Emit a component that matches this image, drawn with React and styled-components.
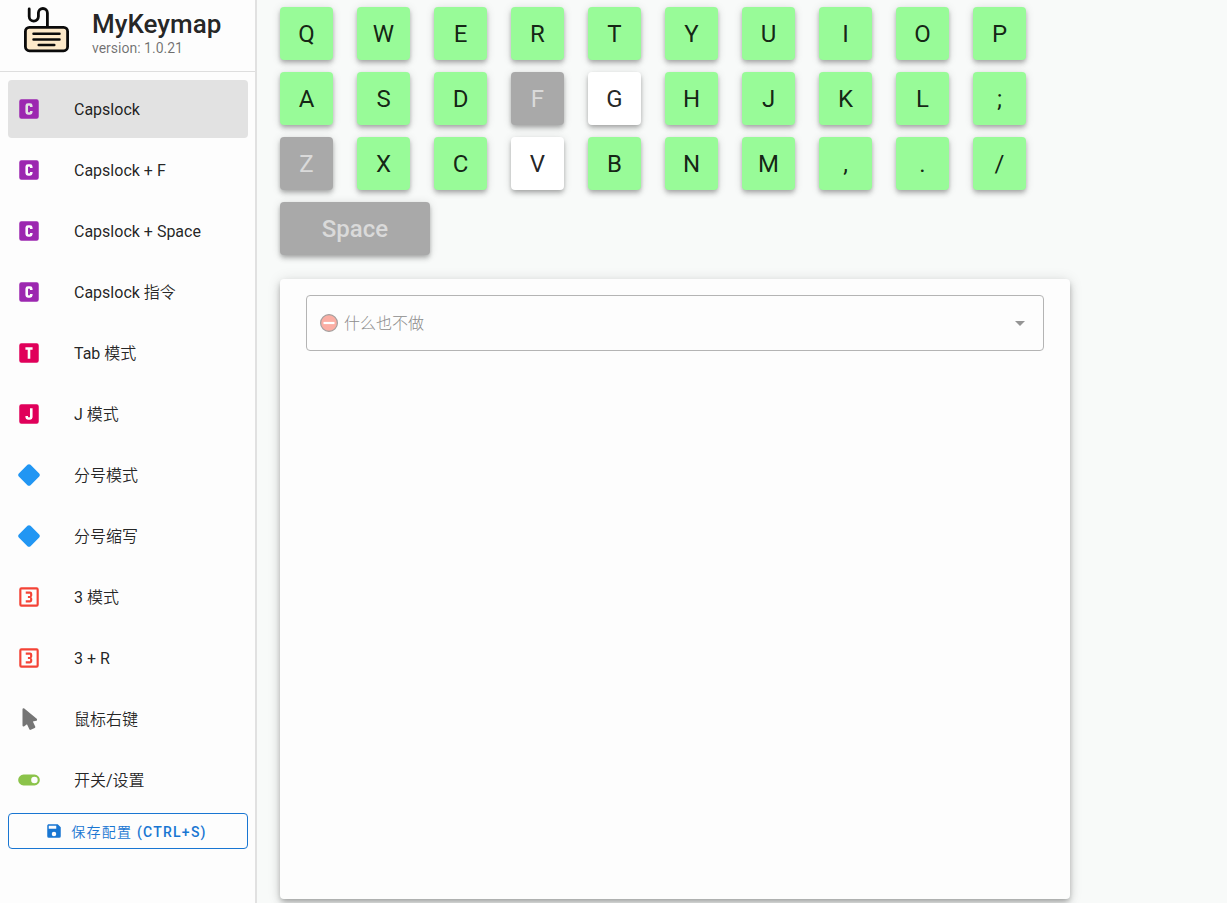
import React, { useState } from "react";
import styled, { createGlobalStyle } from "styled-components";

const GlobalStyle = createGlobalStyle`
  *, *::before, *::after { box-sizing: border-box; }
  body {
    margin: 0;
    background: #f8faf9;
    color: rgba(0, 0, 0, 0.87);
    font-family: Roboto, "Noto Sans CJK SC DemiLight", "Noto Sans CJK SC", sans-serif;
    font-size: 16px;
    line-height: 24px;
  }
  button { font-family: inherit; }
`;

const Page = styled.div`
  display: flex;
  min-height: 100vh;
`;

const Sidebar = styled.aside`
  flex: 0 0 257px;
  background: #fdfdfd;
  border-right: 2px solid #e1e1e1;
`;

const Brand = styled.header`
  display: flex;
  gap: 20px;
  height: 72px;
  padding: 6px 0 0 23px;
  border-bottom: 1px solid #dedede;
`;

const Title = styled.h1`
  margin: 4px 0 0;
  font-size: 26px;
  font-weight: 500;
  line-height: 28px;
`;

const Version = styled.p`
  margin: 0;
  color: rgba(0, 0, 0, 0.56);
  font-size: 14px;
  line-height: 20px;
`;

const Nav = styled.nav`
  display: flex;
  flex-direction: column;
  gap: 3px;
  padding: 8px 7px 4px 8px;
`;

const NavItem = styled.a`
  display: flex;
  align-items: center;
  gap: 32px;
  height: 58px;
  padding: 0 8px;
  border-radius: 4px;
  background: ${(p) => (p.$active ? "#e2e2e2" : "transparent")};
  color: inherit;
  text-decoration: none;
`;

const NavLabel = styled.span`
  padding-top: 2px;
`;

const Icon = styled.svg`
  flex: none;
  width: ${(p) => p.$size}px;
  height: ${(p) => p.$size}px;
  fill: ${(p) => p.$color};
`;

const SaveArea = styled.div`
  padding: 0 7px 0 8px;
`;

const SaveButton = styled.button`
  display: flex;
  align-items: center;
  justify-content: center;
  gap: 8px;
  width: 100%;
  height: 36px;
  padding: 0 4px 0 0;
  border: 1px solid #1976d2;
  border-radius: 4px;
  background: transparent;
  color: #1976d2;
  font-size: 14px;
  font-weight: 500;
  letter-spacing: 1.25px;
  text-transform: uppercase;
`;

const Main = styled.main`
  display: flex;
  flex: 1;
  flex-direction: column;
  gap: 24px;
  padding: 7px 23px 4px;
`;

const Keyboard = styled.section`
  display: flex;
  flex-direction: column;
  gap: 12px;
`;

const KeyRow = styled.div`
  display: flex;
  gap: 24px;
`;

const keyColors = { set: "#98fb98", empty: "#fff", off: "#a9a9a9" };

const Key = styled.button`
  width: ${(p) => (p.$wide ? 150 : 53)}px;
  height: 53px;
  padding: 0;
  border: 0;
  border-radius: 4px;
  background: ${(p) => keyColors[p.$state]};
  box-shadow: 0 2px 4px -1px rgba(0, 0, 0, 0.2), 0 4px 5px rgba(0, 0, 0, 0.14),
    0 1px 10px rgba(0, 0, 0, 0.12);
  color: ${(p) => (p.$state === "off" ? "#dadada" : "rgba(0, 0, 0, 0.87)")};
  font-size: 24px;
  font-weight: ${(p) => (p.$wide ? 500 : 400)};
`;

const Card = styled.section`
  flex: 1;
  width: 100%;
  max-width: 790px;
  padding: 16px 26px;
  border-radius: 4px;
  background: #fdfdfd;
  box-shadow: 0 3px 5px -1px rgba(0, 0, 0, 0.2), 0 5px 8px rgba(0, 0, 0, 0.14),
    0 1px 14px rgba(0, 0, 0, 0.12);
`;

const SelectField = styled.label`
  display: grid;
  grid-template-columns: 37px 1fr 35px;
  align-items: center;
  height: 56px;
  border: 1px solid #b4b4b4;
  border-radius: 4px;
`;

const FieldIcon = styled.span`
  grid-column: ${(p) => p.$column};
  grid-row: 1;
  display: flex;
  padding-left: ${(p) => p.$inset}px;
  pointer-events: none;
`;

const Select = styled.select`
  grid-column: 1 / -1;
  grid-row: 1;
  width: 100%;
  height: 54px;
  padding: 0 36px 0 37px;
  border: 0;
  appearance: none;
  background: transparent;
  color: #8c8c8c;
  font-family: Roboto, "Noto Sans CJK SC Light", "Noto Sans CJK SC", sans-serif;
  font-size: 16px;
  opacity: 1;
`;

const BOX =
  "M19 3H5A2 2 0 0 0 3 5V19A2 2 0 0 0 5 21H19A2 2 0 0 0 21 19V5A2 2 0 0 0 19 3Z";

const shapes = {
  c: `${BOX}M11 6.8H13A2.3 2.3 0 0 1 15.3 9V10.2H12.9V9.1H11.1V14.9H12.9V13.8H15.3V15A2.3 2.3 0 0 1 13 17.2H11A2.3 2.3 0 0 1 8.7 15V9A2.3 2.3 0 0 1 11 6.8Z`,
  t: `${BOX}M8.7 6.8H15.3V9.1H13.2V17.2H10.8V9.1H8.7Z`,
  j: `${BOX}M12.9 6.8H15.3V15A2.3 2.3 0 0 1 13 17.2H11A2.3 2.3 0 0 1 8.7 15V13.8H11.1V14.9H12.9Z`,
  rhombus:
    "M12 2C11.5 2 11 2.19 10.59 2.59L2.59 10.59C1.8 11.37 1.8 12.63 2.59 13.41L10.59 21.41C11.37 22.2 12.63 22.2 13.41 21.41L21.41 13.41C22.2 12.63 22.2 11.37 21.41 10.59L13.41 2.59C13 2.19 12.5 2 12 2Z",
  three: `${BOX}M5 5V19H19V5ZM15 15V13.5A1.5 1.5 0 0 0 13.5 12A1.5 1.5 0 0 0 15 10.5V9A2 2 0 0 0 13 7H9V9H13V11H11V13H13V15H9V17H13A2 2 0 0 0 15 15Z`,
  cursor:
    "M13.64 21.97C13.14 22.21 12.54 22 12.31 21.5L10.13 16.76L7.62 18.78C7.45 18.92 7.24 19 7 19A1 1 0 0 1 6 18V3A1 1 0 0 1 7 2C7.24 2 7.47 2.09 7.64 2.23L7.65 2.22L19.14 11.86C19.57 12.22 19.62 12.85 19.27 13.27C19.12 13.45 18.91 13.57 18.7 13.61L15.54 14.23L17.74 18.96C18 19.46 17.76 20.05 17.26 20.28L13.64 21.97Z",
  toggle:
    "M17 7H7A5 5 0 0 0 7 17H17A5 5 0 0 0 17 7ZM17 15A3 3 0 1 1 17 9A3 3 0 0 1 17 15Z",
  save: "M15 9H5V5H15M12 19A3 3 0 0 1 9 16A3 3 0 0 1 12 13A3 3 0 0 1 15 16A3 3 0 0 1 12 19M17 3H5C3.89 3 3 3.9 3 5V19A2 2 0 0 0 5 21H19A2 2 0 0 0 21 19V7L17 3Z",
  down: "M7 10L12 15L17 10H7Z",
};

function Glyph({ name, color, size = 26 }) {
  return (
    <Icon viewBox="0 0 24 24" $size={size} $color={color} aria-hidden="true">
      <path d={shapes[name]} fillRule="evenodd" />
    </Icon>
  );
}

function Logo() {
  return (
    <svg width="49" height="48" viewBox="0 0 49 48" aria-hidden="true">
      <g fill="none" stroke="#0b0b0b" strokeWidth="2.8" strokeLinecap="round">
        <path d="M6.2 3V10.5A4.6 4.6 0 0 0 15.4 10.5V7A4.5 4.5 0 0 1 24.4 7V20" />
        <rect x="2.4" y="21.4" width="42.2" height="23.4" rx="4" fill="#fde9c9" />
        <path d="M10.5 27.8H36.5M10.5 33.4H36.5M15.7 39H31.3" strokeWidth="2.5" />
      </g>
    </svg>
  );
}

function NoEntry() {
  return (
    <svg width="20" height="20" viewBox="0 0 20 20" aria-hidden="true">
      <circle cx="10" cy="10" r="8.4" fill="#fbaea4" stroke="#a3a09f" strokeWidth="1.2" />
      <path d="M4.5 10H15.5" stroke="#fff" strokeWidth="2.2" />
    </svg>
  );
}

const modes = [
  ["Capslock", "c", "#9c27b0"],
  ["Capslock + F", "c", "#9c27b0"],
  ["Capslock + Space", "c", "#9c27b0"],
  ["Capslock 指令", "c", "#9c27b0"],
  ["Tab 模式", "t", "#e0005a"],
  ["J 模式", "j", "#e0005a"],
  ["分号模式", "rhombus", "#2196f3"],
  ["分号缩写", "rhombus", "#2196f3"],
  ["3 模式", "three", "#f44336"],
  ["3 + R", "three", "#f44336"],
  ["鼠标右键", "cursor", "#757575"],
  ["开关/设置", "toggle", "#8bc34a"],
];

const rows = ["QWERTYUIOP", "ASDFGHJKL;", "ZXCVBNM,./"];

const keyState = (key) =>
  "FZ".includes(key) ? "off" : "GV".includes(key) ? "empty" : "set";

export default function App() {
  const [active, setActive] = useState(0);
  return (
    <>
      <GlobalStyle />
      <Page>
        <Sidebar>
          <Brand>
            <Logo />
            <div>
              <Title>MyKeymap</Title>
              <Version>version: 1.0.21</Version>
            </div>
          </Brand>
          <Nav>
            {modes.map(([label, icon, color], i) => (
              <NavItem
                key={label}
                href={`#mode-${i}`}
                $active={i === active}
                onClick={() => setActive(i)}
              >
                <Glyph name={icon} color={color} />
                <NavLabel>{label}</NavLabel>
              </NavItem>
            ))}
          </Nav>
          <SaveArea>
            <SaveButton type="button">
              <Glyph name="save" color="#1976d2" size={18} />
              <span>保存配置 (Ctrl+S)</span>
            </SaveButton>
          </SaveArea>
        </Sidebar>
        <Main>
          <Keyboard>
            {rows.map((row) => (
              <KeyRow key={row}>
                {[...row].map((key) => (
                  <Key
                    key={key}
                    type="button"
                    $state={keyState(key)}
                    disabled={keyState(key) === "off"}
                  >
                    {key}
                  </Key>
                ))}
              </KeyRow>
            ))}
            <KeyRow>
              <Key type="button" $wide $state="off" disabled>
                Space
              </Key>
            </KeyRow>
          </Keyboard>
          <Card>
            <SelectField>
              <Select disabled aria-label="什么也不做">
                <option>什么也不做</option>
              </Select>
              <FieldIcon $column={1} $inset={12}>
                <NoEntry />
              </FieldIcon>
              <FieldIcon $column={3} $inset={0}>
                <Glyph name="down" color="#959595" size={24} />
              </FieldIcon>
            </SelectField>
          </Card>
        </Main>
      </Page>
    </>
  );
}
